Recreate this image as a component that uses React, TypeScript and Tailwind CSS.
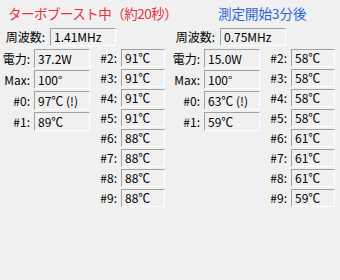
// App.tsx
// Turbo boost monitor - two side-by-side panels with frequency, power and core temps

const FONT = { fontFamily: '"Noto Sans CJK JP", "Noto Sans", sans-serif' }

interface PanelData {
  title: string
  titleClass: string
  freq: string
  power: string
  max: string
  t0: string
  t1: string
  cores: string[]
}

const panels: PanelData[] = [
  {
    title: 'ターボブースト中（約20秒）',
    titleClass: 'pl-[8px] text-[#e4313c] tracking-[-0.5px]',
    freq: '1.41MHz',
    power: '37.2W',
    max: '100°',
    t0: '97℃ (!)',
    t1: '89℃',
    cores: ['91℃', '91℃', '91℃', '91℃', '88℃', '88℃', '88℃', '88℃'],
  },
  {
    title: '測定開始3分後',
    titleClass: 'pl-[48px] text-[#2c64d4]',
    freq: '0.75MHz',
    power: '15.0W',
    max: '100°',
    t0: '63℃ (!)',
    t1: '59℃',
    cores: ['58℃', '58℃', '58℃', '58℃', '61℃', '61℃', '61℃', '59℃'],
  },
]

function Box({ children, className = '' }: { children: React.ReactNode; className?: string }) {
  return (
    <div
      className={`flex items-center pl-[3px] border border-t-[#a0a0a0] border-l-[#a0a0a0] border-b-white border-r-white text-[12px] leading-none text-black whitespace-nowrap ${className}`}
    >
      {children}
    </div>
  )
}

function Panel({ p }: { p: PanelData }) {
  return (
    <div className="w-[170px] shrink-0">
      {/* TITLE */}
      <div className={`h-[28px] pt-[5px] text-[13.5px] leading-[16px] whitespace-nowrap ${p.titleClass}`}>
        {p.title}
      </div>

      {/* FREQUENCY */}
      <div className="flex items-center h-[18px]">
        <span className="w-[46px] pr-[1px] text-right text-[12px] leading-none">周波数:</span>
        <Box className="ml-[4px] w-[66px] h-[18px]">{p.freq}</Box>
      </div>

      <div className="flex mt-[3px]">
        {/* LEFT COLUMN */}
        <div className="flex flex-col gap-[2px]">
          {[
            ['電力:', p.power],
            ['Max:', p.max],
            ['#0:', p.t0],
            ['#1:', p.t1],
          ].map(([label, value]) => (
            <div key={label} className="flex items-center h-[19px]">
              <span className="w-[30px] text-right text-[12px] leading-none">{label}</span>
              <Box className="ml-[4px] w-[56px] h-[19px]">{value}</Box>
            </div>
          ))}
        </div>

        {/* RIGHT COLUMN */}
        <div className="flex flex-col gap-[2px] ml-[5px]">
          {p.cores.map((v, i) => (
            <div key={i} className="flex items-center h-[18px]">
              <span className="w-[22px] text-right text-[12px] leading-none">#{i + 2}:</span>
              <Box className="ml-[4px] w-[44px] h-[18px]">{v}</Box>
            </div>
          ))}
        </div>
      </div>
    </div>
  )
}

export default function App() {
  return (
    <div className="w-[340px] h-[280px] bg-[#f0f0f0] flex overflow-hidden" style={FONT}>
      {panels.map((p) => (
        <Panel key={p.title} p={p} />
      ))}
    </div>
  )
}
